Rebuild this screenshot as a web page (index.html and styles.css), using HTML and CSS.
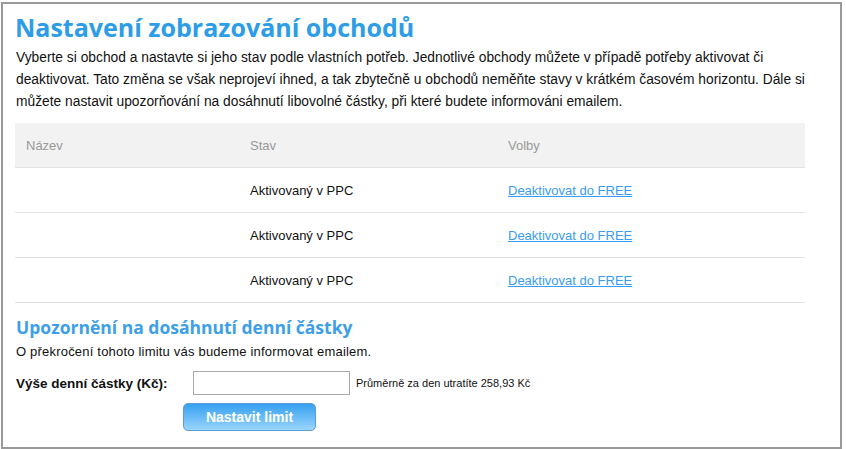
FILE: index.html
```html
<!DOCTYPE html>
<html lang="cs">
<head>
  <meta charset="UTF-8">
  <title>Nastavení zobrazování obchodů</title>
  <link rel="stylesheet" href="styles.css">
</head>
<body>
  <div class="panel">
    <h1 class="title">Nastavení zobrazování obchodů</h1>
    <p class="intro">
      Vyberte si obchod a nastavte si jeho stav podle vlastních potřeb. Jednotlivé obchody můžete v případě potřeby aktivovat či<br>
      deaktivovat. Tato změna se však neprojeví ihned, a tak zbytečně u obchodů neměňte stavy v krátkém časovém horizontu. Dále si<br>
      můžete nastavit upozorňování na dosáhnutí libovolné částky, při které budete informováni emailem.
    </p>

    <table class="shops">
      <thead>
        <tr>
          <th class="colName">Název</th>
          <th class="colState">Stav</th>
          <th>Volby</th>
        </tr>
      </thead>
      <tbody>
        <tr>
          <td></td>
          <td>Aktivovaný v PPC</td>
          <td><a href="#">Deaktivovat do FREE</a></td>
        </tr>
        <tr>
          <td></td>
          <td>Aktivovaný v PPC</td>
          <td><a href="#">Deaktivovat do FREE</a></td>
        </tr>
        <tr>
          <td></td>
          <td>Aktivovaný v PPC</td>
          <td><a href="#">Deaktivovat do FREE</a></td>
        </tr>
      </tbody>
    </table>

    <h2 class="subtitle">Upozornění na dosáhnutí denní částky</h2>
    <p class="note">O překročení tohoto limitu vás budeme informovat emailem.</p>

    <form class="limitForm" onsubmit="return false;">
      <div class="limitRow">
        <label class="limitLabel" for="limit">Výše denní částky (Kč):</label>
        <input class="limitInput" type="text" id="limit">
        <span class="limitHint">Průměrně za den utratíte 258,93 Kč</span>
      </div>
      <button class="limitBtn" type="submit">Nastavit limit</button>
    </form>
  </div>
</body>
</html>
```

FILE: styles.css
```css
body {
  margin: 0;
  font-family: "Liberation Sans", Arial, sans-serif;
  font-size: 13px;
  color: #111;
  background: #fff;
}
.panel {
  box-sizing: border-box;
  width: 841px;
  height: 447px;
  margin: 2px 0 0 1px;
  padding: 7px 35px 0 12px;
  border: solid #999 2px;
}
.title {
  margin: 0;
  font-family: "Open Sans", "DejaVu Sans", sans-serif;
  font-size: 25px;
  font-weight: bold;
  line-height: 32px;
  color: #2c9de6;
}
.intro {
  margin: 4px 0 0 1px;
  font-size: 13.8px;
  line-height: 22px;
  white-space: nowrap;
}
.shops {
  width: 790px;
  margin-top: 10px;
  border-collapse: collapse;
}
.shops th {
  background: #f2f2f2;
  color: #999;
  font-weight: normal;
  text-align: left;
  height: 44px;
  padding: 0 10px;
  border-bottom: solid #e2e2e2 1px;
}
.shops td {
  height: 44px;
  padding: 0 10px;
  border-bottom: solid #e2e2e2 1px;
}
.colName {
  width: 204px;
  padding-left: 11px !important;
}
.colState {
  width: 238px;
}
.shops a {
  color: #3a9cf0;
}
.subtitle {
  margin: 12px 0 0 1px;
  font-family: "Open Sans", "DejaVu Sans", sans-serif;
  font-size: 17.5px;
  font-weight: bold;
  line-height: 24px;
  color: #3da0e6;
}
.note {
  margin: 3px 0 0 1px;
  line-height: 20px;
  letter-spacing: 0.2px;
}
.limitForm {
  margin: 9px 0 0 1px;
}
.limitRow {
  display: flex;
  align-items: center;
}
.limitLabel {
  font-weight: bold;
  font-size: 13.5px;
  width: 177px;
}
.limitInput {
  box-sizing: border-box;
  width: 157px;
  height: 24px;
  border: solid #aaa 1px;
  margin: 0;
}
.limitHint {
  font-size: 11px;
  margin-left: 6px;
}
.limitBtn {
  display: block;
  box-sizing: border-box;
  width: 133px;
  height: 28px;
  margin: 8px 0 0 167px;
  border: solid #5a9fd8 1px;
  border-radius: 5px;
  background: linear-gradient(#36a0f0, #9ad5fc);
  color: #fff;
  font-family: "Liberation Sans", Arial, sans-serif;
  font-size: 14px;
  font-weight: bold;
}
```
